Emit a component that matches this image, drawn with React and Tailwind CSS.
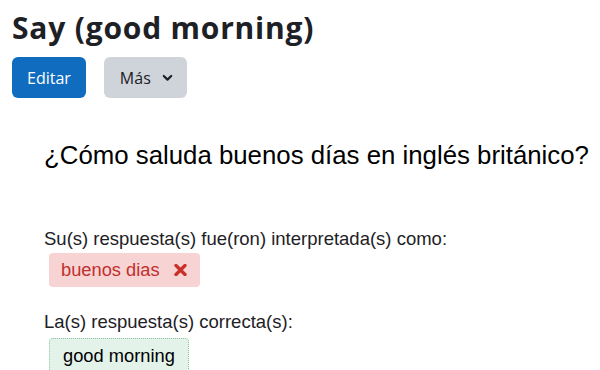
import React from 'react';

function ChevronDown() {
  return (
    <svg width="11" height="8" viewBox="0 0 11 8" fill="none">
      <path d="M1.8 2 L5.5 5.6 L9.2 2" stroke="#1d2125" strokeWidth="2.2" strokeLinecap="round" strokeLinejoin="round" />
    </svg>
  );
}

function CrossIcon() {
  return (
    <svg width="13" height="12" viewBox="0 0 13 12" fill="none">
      <path d="M2 1.5 L11 10.5 M11 1.5 L2 10.5" stroke="#c8302a" strokeWidth="3.3" strokeLinecap="round" />
    </svg>
  );
}

export default function App() {
  return (
    <div className="w-[600px] h-[370px] overflow-hidden bg-white text-[#1d2125]">
      <div className="px-3 pt-[8px]" style={{ fontFamily: '"Open Sans", "Noto Sans", sans-serif' }}>
        <h1 className="text-[30px] leading-[40px] font-bold tracking-[0.8px]">
          Say (good morning)
        </h1>
        <div className="flex gap-[18px] mt-[9px]">
          <button className="h-[41px] px-[15px] rounded-[6px] bg-[#0f6cbf] text-white text-[16px]">
            Editar
          </button>
          <button className="h-[41px] pl-[16px] pr-[14px] rounded-[6px] bg-[#ced4da] text-[#1d2125] text-[16px] flex items-center gap-[11px]">
            Más
            <ChevronDown />
          </button>
        </div>
      </div>

      <div className="pl-[44px] mt-[42px]" style={{ fontFamily: '"Liberation Sans", Arial, sans-serif' }}>
        <p className="text-[25.8px] leading-[30px] text-black">
          ¿Cómo saluda buenos días en inglés británico?
        </p>

        <div className="mt-[58px] text-[18.5px] leading-[22px] text-[#1d2125]">
          Su(s) respuesta(s) fue(ron) interpretada(s) como:
        </div>
        <div className="mt-[3px] ml-[5px] inline-flex items-center gap-[14px] h-[34px] pl-[12px] pr-[13px] rounded-[4px] bg-[#f8d3d4] text-[#c0302d] text-[18.3px]">
          buenos dias
          <CrossIcon />
        </div>

        <div className="mt-[24px] text-[18.5px] leading-[22px] text-[#1d2125]">
          La(s) respuesta(s) correcta(s):
        </div>
        <div className="mt-[5px] ml-[5px] inline-flex items-center h-[36px] px-[13px] rounded-[4px] bg-[#e3f3ea] border border-dotted border-[#8cc4a4] text-black text-[18.3px]">
          good morning
        </div>
      </div>
    </div>
  );
}
